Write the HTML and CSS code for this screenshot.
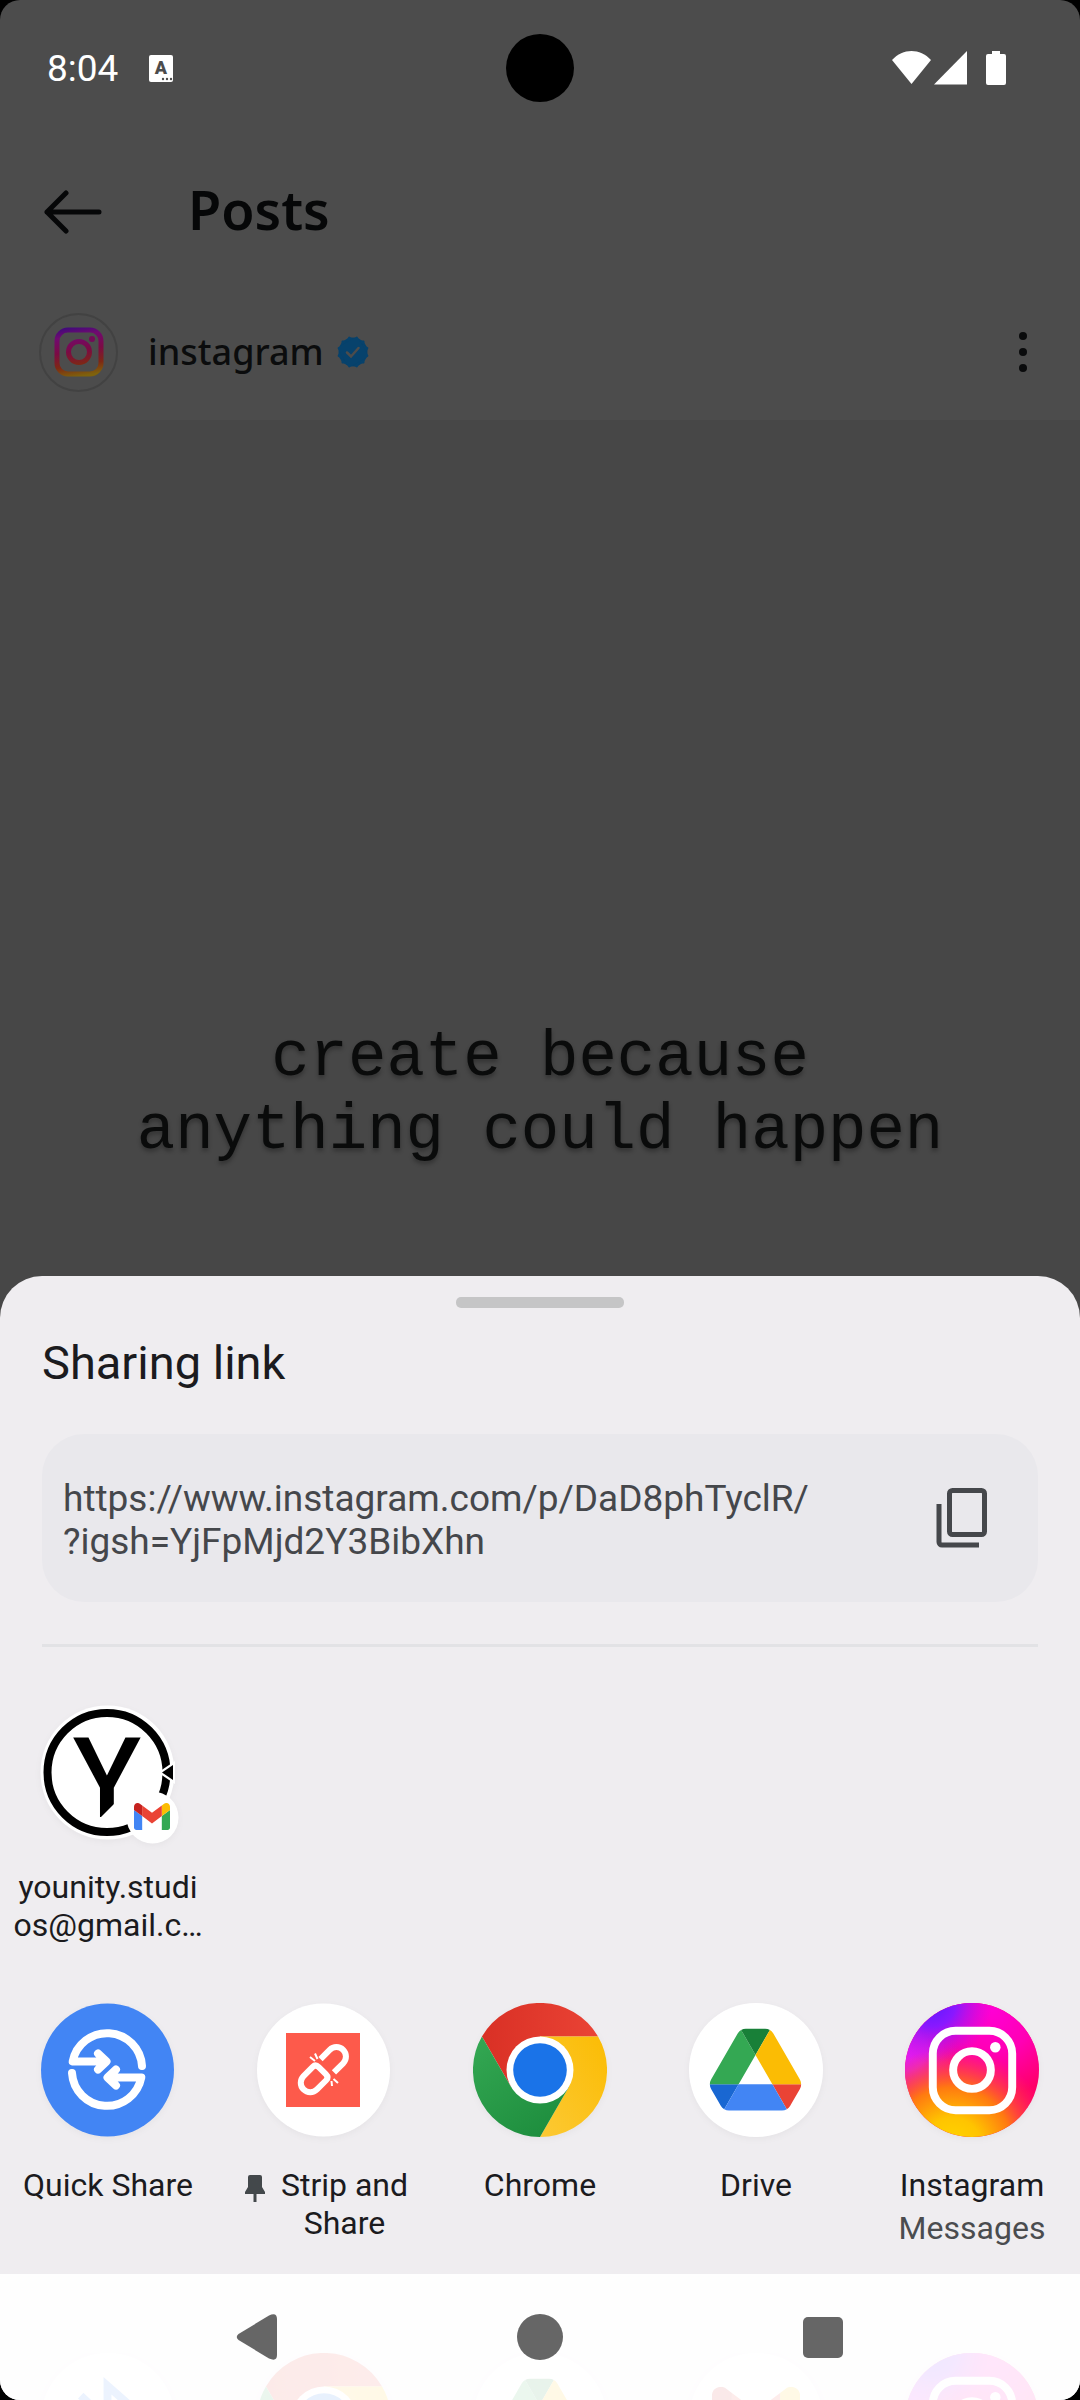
FILE: index.html
```html
<!DOCTYPE html>
<html lang="en">
<head>
<meta charset="UTF-8">
<meta name="viewport" content="width=device-width, initial-scale=1">
<title>Sharing link</title>
<link rel="stylesheet" href="styles.css">
</head>
<body>
<!-- shared app icons -->
<svg class="defs" aria-hidden="true">
    <defs>
        <linearGradient id="glyphDim" gradientUnits="userSpaceOnUse" x1="12" y1="0" x2="20" y2="50">
            <stop offset="0" stop-color="#3c0a7c"/>
            <stop offset="0.2" stop-color="#700a70"/>
            <stop offset="0.5" stop-color="#7c0a44"/>
            <stop offset="0.78" stop-color="#7e2814"/>
            <stop offset="1" stop-color="#7e620c"/>
        </linearGradient>
        <radialGradient id="igPink" cx="0.65" cy="0.05" r="0.65">
            <stop offset="0" stop-color="#ff00d4"/>
            <stop offset="0.5" stop-color="#ff00b4"/>
            <stop offset="1" stop-color="#ff00b4" stop-opacity="0"/>
        </radialGradient>
        <radialGradient id="igMagenta" cx="0" cy="0.35" r="0.4">
            <stop offset="0" stop-color="#e01cf4"/>
            <stop offset="0.4" stop-color="#e81ce0"/>
            <stop offset="1" stop-color="#f010c8" stop-opacity="0"/>
        </radialGradient>
        <radialGradient id="igPurple" cx="0.2" cy="0" r="0.45">
            <stop offset="0" stop-color="#5a1cff"/>
            <stop offset="0.4" stop-color="#8a18ff"/>
            <stop offset="1" stop-color="#c010f0" stop-opacity="0"/>
        </radialGradient>
        <radialGradient id="igYellow" cx="0.35" cy="1.08" r="0.75">
            <stop offset="0" stop-color="#ffd800"/>
            <stop offset="0.3" stop-color="#ffc400"/>
            <stop offset="0.6" stop-color="#ff7a10"/>
            <stop offset="1" stop-color="#ff3a50" stop-opacity="0"/>
        </radialGradient>
        <linearGradient id="chromeRed" x1="0" y1="0" x2="1" y2="0">
            <stop offset="0" stop-color="#d93025"/>
            <stop offset="1" stop-color="#ea4335"/>
        </linearGradient>
        <linearGradient id="chromeGreen" x1="0" y1="0" x2="0.7" y2="1">
            <stop offset="0" stop-color="#34a853"/>
            <stop offset="1" stop-color="#1e8e3e"/>
        </linearGradient>
        <linearGradient id="chromeYellow" x1="1" y1="0" x2="0" y2="1">
            <stop offset="0" stop-color="#fbbc04"/>
            <stop offset="1" stop-color="#fcc934"/>
        </linearGradient>
    </defs>
    <symbol id="chrome" viewBox="0 0 135 135">
        <path fill="url(#chromeRed)" d="M9 33.75A67.5 67.5 0 0 1 126 33.75H67.5V67.5L38.3 84.4Z"/>
        <path fill="url(#chromeYellow)" d="M126 33.75A67.5 67.5 0 0 1 67.5 135L96.7 84.4 67.5 67.5V33.75Z"/>
        <path fill="url(#chromeGreen)" d="M67.5 135A67.5 67.5 0 0 1 9 33.75L38.3 84.4 67.5 67.5 96.7 84.4Z"/>
        <circle cx="67.5" cy="67.5" r="33.75" fill="#fff"/>
        <circle cx="67.5" cy="67.5" r="27" fill="#1a73e8"/>
    </symbol>
    <symbol id="drive" viewBox="0 0 135 135">
        <circle cx="67.5" cy="67.5" r="67.5" fill="#fff"/>
        <g transform="translate(21 26) scale(1.054)">
            <path fill="#1967d2" d="m6.6 66.85 3.85 6.65c.8 1.4 1.95 2.5 3.3 3.3l13.75-23.8h-27.5c0 1.55.4 3.1 1.2 4.5z"/>
            <path fill="#34a853" d="m43.65 25-13.75-23.8c-1.35.8-2.5 1.9-3.3 3.3l-25.4 44a9.06 9.06 0 0 0-1.2 4.5h27.5z"/>
            <path fill="#ea4335" d="m73.55 76.8c1.35-.8 2.5-1.9 3.3-3.3l1.6-2.75 7.65-13.25c.8-1.4 1.2-2.95 1.2-4.5h-27.5z"/>
            <path fill="#188038" d="m43.65 25 13.75-23.8c-1.35-.8-2.9-1.2-4.5-1.2h-18.5c-1.6 0-3.15.45-4.5 1.2z"/>
            <path fill="#4285f4" d="m59.8 53h-32.3l-13.75 23.8c1.35.8 2.9 1.2 4.5 1.2h50.8c1.6 0 3.15-.45 4.5-1.2z"/>
            <path fill="#fbbc04" d="m73.4 26.5-12.7-22c-.8-1.4-1.95-2.5-3.3-3.3l-13.75 23.8 16.15 28h27.45c0-1.55-.4-3.1-1.2-4.5z"/>
        </g>
    </symbol>
    <symbol id="gmailMark" viewBox="52 42 88 66">
        <path fill="#4285f4" d="M58 108h14V74L52 59v43c0 3.32 2.69 6 6 6"/>
        <path fill="#34a853" d="M120 108h14c3.32 0 6-2.69 6-6V59l-20 15"/>
        <path fill="#fbbc04" d="M120 48v26l20-15v-8c0-7.42-8.47-11.65-14.4-7.2"/>
        <path fill="#ea4335" d="M72 74V48l24 18 24-18v26L96 92"/>
        <path fill="#c5221f" d="M52 51v8l20 15V48l-5.6-4.2c-5.94-4.45-14.4-.22-14.4 7.2"/>
    </symbol>
    <symbol id="gmail" viewBox="0 0 135 135">
        <circle cx="67.5" cy="67.5" r="67.5" fill="#fff"/>
        <use href="#gmailMark" x="23" y="34" width="89" height="67"/>
    </symbol>
    <symbol id="bluetooth" viewBox="0 0 135 135">
        <circle cx="67.5" cy="67.5" r="67.5" fill="#fff"/>
        <path fill="none" stroke="#4285f4" stroke-width="8" d="M40 43 92 92 67 114V33L92 55 40 103"/>
    </symbol>
    <symbol id="insta" viewBox="0 0 135 135">
        <circle cx="67.5" cy="67.5" r="67.5" fill="#ff0068"/>
        <circle cx="67.5" cy="67.5" r="67.5" fill="url(#igPink)"/>
        <circle cx="67.5" cy="67.5" r="67.5" fill="url(#igMagenta)"/>
        <circle cx="67.5" cy="67.5" r="67.5" fill="url(#igYellow)"/>
        <circle cx="67.5" cy="67.5" r="67.5" fill="url(#igPurple)"/>
        <rect x="28" y="28" width="80" height="80" rx="23" fill="none" stroke="#fff" stroke-width="8"/>
        <circle cx="67.5" cy="67.5" r="19" fill="none" stroke="#fff" stroke-width="8"/>
        <circle cx="91" cy="44.5" r="5.3" fill="#fff"/>
    </symbol>
</svg>

<div class="screen">
    <header class="status">
        <time class="clock">8:04</time>
        <svg class="keyboard" width="24" height="28" viewBox="0 0 24 28">
            <rect width="24" height="27" rx="2" fill="#fff"/>
            <text x="12" y="19" text-anchor="middle">A</text>
            <g fill="#4c4c4c"><circle cx="14" cy="24" r="1.2"/><circle cx="18" cy="24" r="1.2"/><circle cx="22" cy="24" r="1.2"/></g>
        </svg>
        <svg class="signals" width="116" height="36" viewBox="0 0 116 36" fill="#fff">
            <path d="M0 9C11-3 28-3 39 9L19.500 33Z"/>
            <path d="M42 33.500 75 0V33.500Z"/>
            <path d="M100 0h8v3h4a2 2 0 0 1 2 2v27a2 2 0 0 1-2 2H96a2 2 0 0 1-2-2V5a2 2 0 0 1 2-2h4z"/>
        </svg>
        <span class="camera"></span>
    </header>

    <main class="page">
        <div class="appbar">
            <button type="button" class="plain" aria-label="Back">
                <svg width="58" height="44" viewBox="0 0 58 44" fill="none" stroke="#060708" stroke-width="5" stroke-linecap="round" stroke-linejoin="round"><path d="M55 22H3M22 3 3 22 22 41"/></svg>
            </button>
            <h1>Posts</h1>
        </div>
        <div class="author">
            <span class="avatar">
                <svg width="50" height="50" viewBox="0 0 50 50">
                    <rect x="3" y="3" width="44" height="44" rx="11" fill="none" stroke="url(#glyphDim)" stroke-width="5"/>
                    <circle cx="25" cy="25" r="10.500" fill="none" stroke="url(#glyphDim)" stroke-width="5"/>
                    <circle cx="38" cy="12" r="3" fill="#740a58"/>
                </svg>
            </span>
            <span class="username">instagram</span>
            <svg width="34" height="34" viewBox="0 0 34 34">
                <g fill="#07426c">
                    <circle cx="17" cy="17" r="14.500"/>
                    <rect x="5.500" y="5.500" width="23" height="23" rx="1"/>
                    <rect x="5.500" y="5.500" width="23" height="23" rx="1" transform="rotate(30 17 17)"/>
                    <rect x="5.500" y="5.500" width="23" height="23" rx="1" transform="rotate(60 17 17)"/>
                </g>
                <path d="M11 17.500 15 21.500 22.500 13" fill="none" stroke="#4c4c4c" stroke-width="2.500" stroke-linecap="round"/>
            </svg>
            <button type="button" class="plain more" aria-label="More options">
                <svg width="10" height="42" viewBox="0 0 10 42" fill="#0a0b0c"><circle cx="5" cy="5" r="4"/><circle cx="5" cy="21" r="4"/><circle cx="5" cy="37" r="4"/></svg>
            </button>
        </div>
        <div class="post">
            <p>create because<br>anything could happen</p>
        </div>
    </main>

    <section class="sheet" aria-label="Share">
        <div class="handle"></div>
        <h2>Sharing link</h2>
        <div class="linkbox">
            <p>https://www.instagram.com/p/DaD8phTyclR/<br>?igsh=YjFpMjd2Y3BibXhn</p>
            <button type="button" class="plain" aria-label="Copy link">
                <svg width="52" height="60" viewBox="0 0 52 60" fill="none" stroke="#45474b" stroke-width="5"><rect x="13.500" y="2.500" width="35" height="44" rx="3"/><path d="M3 16V54a3 3 0 0 0 3 3H43"/></svg>
            </button>
        </div>
        <hr>

        <div class="targets">
            <button type="button" class="target">
                <svg class="icon" viewBox="0 0 134 134">
                    <circle cx="66.500" cy="67.500" r="67" fill="#fff"/>
                    <circle cx="66" cy="67.500" r="59.500" fill="none" stroke="#000" stroke-width="8"/>
                    <text class="mono-y" x="66" y="112" text-anchor="middle">Y</text>
                    <path fill="#fff" d="M58 114 74 98V114Z"/>
                    <path fill="#fff" d="M117 67.500 134 56V79Z"/>
                    <path d="M121 67.500 132 60V75Z"/>
                    <circle cx="111.500" cy="112.500" r="26" fill="#fff"/>
                    <use href="#gmailMark" x="93" y="98" width="36" height="27"/>
                </svg>
                <span class="label">younity.studi<br>os@gmail.c…</span>
            </button>
        </div>

        <div class="targets apps">
            <button type="button" class="target">
                <svg class="icon" viewBox="0 0 134 134">
                    <circle cx="66.500" cy="67" r="66.500" fill="#4285f4"/>
                    <g id="qsHalf" fill="none" stroke="#fff" stroke-width="8" stroke-linecap="round" stroke-linejoin="round">
                        <path d="M101 63A35 35 0 0 0 31.700 58.500H65M57 50.500 65.500 58.500 57 66.500"/>
                    </g>
                    <use href="#qsHalf" transform="rotate(180 66 66.500)"/>
                </svg>
                <span class="label">Quick Share</span>
            </button>
            <button type="button" class="target">
                <svg class="icon" viewBox="0 0 134 134">
                    <circle cx="66.500" cy="67" r="66.500" fill="#fff"/>
                    <rect x="29" y="30" width="74" height="74" fill="#fd5a4b"/>
                    <g transform="translate(66 67) rotate(-45)" fill="none" stroke="#fff" stroke-width="6">
                        <path d="M-5-9.500H-18a9.500 9.500 0 0 0 0 19H-5Q-1 9.500-1 5V-5Q-1-9.500-5-9.500Z"/>
                        <path d="M6-9.500H19a9.500 9.500 0 0 1 0 19H6"/>
                    </g>
                    <path d="M53 54 58 58M58 50.500 60.500 56M75 83 74.500 78M81 80 76.500 76" stroke="#fff" stroke-width="2"/>
                </svg>
                <span class="label pinned">
                    <svg width="20" height="28" viewBox="0 0 20 28" fill="#43484b"><path d="M5 0h10a2 2 0 0 1 2 2V12L20 17V19H0V17L3 12V2a2 2 0 0 1 2-2Z"/><path d="M8.500 18h3V27h-3z"/></svg>
                    <span>Strip and<br>Share</span>
                </span>
            </button>
            <button type="button" class="target">
                <svg class="icon"><use href="#chrome"/></svg>
                <span class="label">Chrome</span>
            </button>
            <button type="button" class="target">
                <svg class="icon"><use href="#drive"/></svg>
                <span class="label">Drive</span>
            </button>
            <button type="button" class="target">
                <svg class="icon"><use href="#insta"/></svg>
                <span class="label">Instagram</span>
                <span class="label sub">Messages</span>
            </button>
        </div>

        <!-- next row, showing through the navigation bar -->
        <div class="targets peek" aria-hidden="true">
            <svg class="icon"><use href="#bluetooth"/></svg>
            <svg class="icon"><use href="#chrome"/></svg>
            <svg class="icon"><use href="#drive"/></svg>
            <svg class="icon"><use href="#gmail"/></svg>
            <svg class="icon"><use href="#insta"/></svg>
        </div>
    </section>

    <nav class="navbar">
        <button type="button" class="plain" aria-label="Back">
            <svg width="46" height="46" viewBox="0 0 46 46"><path fill="#666" d="M4.500 20 35 1.500Q43 -2 43 5V41Q43 48 35 44.500L4.500 26Q1 23 4.500 20Z"/></svg>
        </button>
        <button type="button" class="plain" aria-label="Home">
            <svg width="46" height="46" viewBox="0 0 46 46"><circle cx="23" cy="23" r="23" fill="#666"/></svg>
        </button>
        <button type="button" class="plain" aria-label="Recent apps">
            <svg width="46" height="46" viewBox="0 0 46 46"><rect x="3" y="3" width="40" height="41" rx="5" fill="#666"/></svg>
        </button>
    </nav>
</div>
</body>
</html>
```
FILE: styles.css
```css
*{box-sizing:border-box;}
body{
    margin:0;
    background:#000;
    font-family:Roboto,"Liberation Sans",sans-serif;
}
h1,h2,p{margin:0;font-weight:400;}
svg{display:block;flex:none;}
button{
    font:inherit;
    color:inherit;
    background:none;
    border:none;
    padding:0;
    cursor:pointer;
}
.defs{position:absolute;width:0;height:0;}
.screen{
    position:relative;
    height:100vh;
    overflow:hidden;
    border-radius:20px;
    background:#4c4c4c;
}

/* status bar */
.status{
    position:relative;
    display:flex;
    align-items:center;
    height:136px;
    padding:2px 72px 0 47px;
    color:#fff;
}
.clock{font-size:37px;line-height:42px;}
.keyboard{margin-left:31px;}
.keyboard text{font-size:18px;font-weight:900;fill:#4c4c4c;}
.signals{margin-left:auto;}
.camera{
    position:absolute;
    top:34px;
    left:50%;
    width:68px;
    height:68px;
    margin-left:-34px;
    border-radius:50%;
    background:#000;
}

/* dimmed page */
.appbar{
    display:flex;
    align-items:center;
    gap:86px;
    height:148px;
    padding:4px 44px 0;
}
.appbar h1{
    padding-bottom:6px;
    font-family:"Noto Sans","Open Sans",sans-serif;
    font-size:54px;
    line-height:60px;
    font-weight:600;
    color:#060708;
}
.author{
    display:flex;
    align-items:center;
    height:136px;
    padding:0 52px 0 39px;
}
.avatar{
    display:flex;
    align-items:center;
    justify-content:center;
    width:79px;
    height:79px;
    border:2px solid #424242;
    border-radius:50%;
}
.username{
    margin:0 12px 0 30px;
    font-family:"Noto Sans","Open Sans",sans-serif;
    font-size:36px;
    line-height:48px;
    font-weight:500;
    color:#0b0c0d;
}
.more{margin-left:auto;}
.post{
    display:flex;
    align-items:center;
    justify-content:center;
    aspect-ratio:4/5;
    background:#474747;
}
.post p{
    font-family:"Liberation Mono",monospace;
    font-size:64px;
    line-height:73px;
    text-align:center;
    color:#0a0b0b;
    text-shadow:0 3px 4px rgba(0,0,0,0.3);
}

/* share sheet */
.sheet{
    position:absolute;
    left:0;
    right:0;
    bottom:0;
    padding-top:21px;
    border-radius:42px 42px 0 0;
    background:#efedf0;
    color:#1b1b1e;
}
.handle{
    width:168px;
    height:11px;
    margin:0 auto 27px;
    border-radius:5px;
    background:#c5c5c6;
}
.sheet h2{
    margin:0 42px 43px;
    font-size:47px;
    line-height:56px;
}
.linkbox{
    display:flex;
    align-items:center;
    justify-content:space-between;
    height:168px;
    margin:0 42px;
    padding:0 50px 0 21px;
    border-radius:42px;
    background:#e9e8ec;
    color:#45474b;
}
.linkbox p{padding-top:3px;font-size:37px;line-height:43px;}
.sheet hr{
    height:3px;
    margin:42px 42px 58px;
    border:none;
    background:#e2e2e5;
}
.targets{
    display:grid;
    grid-template-columns:repeat(5,1fr);
    justify-items:center;
}
.target{
    display:flex;
    flex-direction:column;
    align-items:center;
}
.icon{
    width:134px;
    height:134px;
    margin-bottom:29px;
    overflow:visible;
    border-radius:50%;
    filter:drop-shadow(0 2px 3px rgba(0,0,0,0.04));
}
.mono-y{font-size:112px;font-weight:500;}
.label{
    font-size:32px;
    line-height:38px;
    text-align:center;
}
.sub{margin-top:5px;color:#4a4c4f;}
.pinned{display:flex;gap:16px;padding-left:5px;}
.pinned svg{margin-top:9px;}
.apps{height:350px;margin-top:59px;}
.peek{height:47px;overflow:hidden;}

/* system navigation */
.navbar{
    position:absolute;
    left:0;
    right:0;
    bottom:0;
    display:flex;
    align-items:center;
    justify-content:center;
    gap:237px;
    height:126px;
    background:rgba(255,255,255,0.9);
}
```
